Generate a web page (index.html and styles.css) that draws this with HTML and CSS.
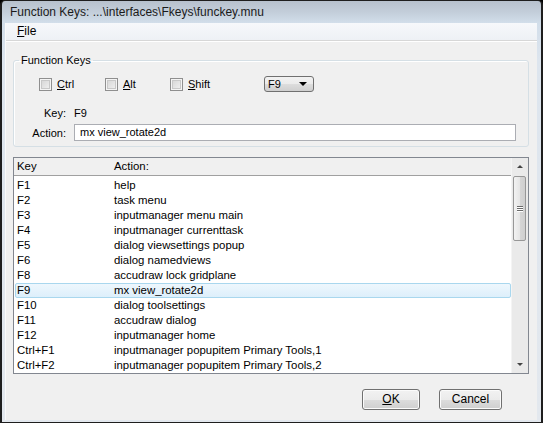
FILE: index.html
```html
<!DOCTYPE html>
<html>
<head>
<meta charset="utf-8">
<link rel="stylesheet" href="styles.css">
</head>
<body>
<div class="window">
  <div class="titlebar">Function Keys: ...\interfaces\Fkeys\funckey.mnu</div>
  <div class="client">
    <div class="menubar"><span class="menuitem"><u>F</u>ile</span></div>
    <div class="content">
      <fieldset class="group">
        <legend class="legend">Function Keys</legend>
        <div class="mods">
          <label class="check w-ctrl"><span class="box"></span><span><u>C</u>trl</span></label>
          <label class="check w-alt"><span class="box"></span><span><u>A</u>lt</span></label>
          <label class="check w-shift"><span class="box"></span><span><u>S</u>hift</span></label>
          <div class="combo"><span class="combo-text">F9</span><span class="combo-arrow"></span></div>
        </div>
        <div class="field key-field"><span class="flabel key-label">Key:</span><span class="fvalue">F9</span></div>
        <div class="field action-field"><span class="flabel action-label">Action:</span><div class="input">mx view_rotate2d</div></div>
      </fieldset>
      <div class="list">
        <div class="list-main">
          <div class="list-header"><span class="col-key">Key</span><span class="col-action">Action:</span></div>
          <div class="rows">
            <div class="row"><span class="col-key">F1</span><span class="col-action">help</span></div>
            <div class="row"><span class="col-key">F2</span><span class="col-action">task menu</span></div>
            <div class="row"><span class="col-key">F3</span><span class="col-action">inputmanager menu main</span></div>
            <div class="row"><span class="col-key">F4</span><span class="col-action">inputmanager currenttask</span></div>
            <div class="row"><span class="col-key">F5</span><span class="col-action">dialog viewsettings popup</span></div>
            <div class="row"><span class="col-key">F6</span><span class="col-action">dialog namedviews</span></div>
            <div class="row"><span class="col-key">F8</span><span class="col-action">accudraw lock gridplane</span></div>
            <div class="row selected"><span class="col-key">F9</span><span class="col-action">mx view_rotate2d</span></div>
            <div class="row"><span class="col-key">F10</span><span class="col-action">dialog toolsettings</span></div>
            <div class="row"><span class="col-key">F11</span><span class="col-action">accudraw dialog</span></div>
            <div class="row"><span class="col-key">F12</span><span class="col-action">inputmanager home</span></div>
            <div class="row"><span class="col-key">Ctrl+F1</span><span class="col-action">inputmanager popupitem Primary Tools,1</span></div>
            <div class="row"><span class="col-key">Ctrl+F2</span><span class="col-action">inputmanager popupitem Primary Tools,2</span></div>
          </div>
        </div>
        <div class="scrollbar">
          <div class="sb-btn"><span class="tri-up"></span></div>
          <div class="sb-track">
            <div class="sb-thumb"><span class="grip"></span><span class="grip"></span><span class="grip"></span></div>
          </div>
          <div class="sb-btn"><span class="tri-down"></span></div>
        </div>
      </div>
      <div class="buttons">
        <div class="button btn-ok"><u>O</u>K</div>
        <div class="button btn-cancel">Cancel</div>
      </div>
    </div>
  </div>
</div>
</body>
</html>
```
FILE: styles.css
```css
html, body {
  margin: 0;
  padding: 0;
  background: #000;
}
body {
  width: 543px;
  height: 423px;
  overflow: hidden;
  font-family: "Liberation Sans", Arial, sans-serif;
  font-size: 11px;
  color: #000;
}
.window {
  width: 543px;
  height: 423px;
  box-sizing: border-box;
  border: 1px solid #1e1e1e;
  border-left-width: 2px;
  border-right-width: 2px;
  border-radius: 5px 5px 0 0;
  background: linear-gradient(#b7c1cd 0px, #c4cfdb 12px, #d2deea 22px, #dde5ee 60px, #e3e8ee 100%);
  padding: 0 4px 2px 3px;
  display: flex;
  flex-direction: column;
}
.titlebar {
  height: 22px;
  line-height: 22px;
  padding-left: 5px;
  font-size: 12px;
  color: #1a1a1a;
  white-space: nowrap;
}
.client {
  flex: 1;
  background: #f0f0f0;
  border-left: 1px solid #fafafa;
  display: flex;
  flex-direction: column;
}
.menubar {
  height: 17px;
  border-bottom: 1px solid #d7d7d7;
  background: linear-gradient(#f6f8fb, #eef1f5);
  box-shadow: 0 1px 0 #fff;
}
.menuitem {
  display: inline-block;
  line-height: 16px;
  padding-left: 11px;
  font-size: 12px;
}
.content {
  flex: 1;
  padding: 12px 8px 0 7px;
  display: flex;
  flex-direction: column;
}
.group {
  margin: 0;
  width: 516px;
  box-sizing: border-box;
  border: 1px solid #d5dfe5;
  border-radius: 3px;
  padding: 9px 0 5px 0;
  box-shadow: inset 1px 1px 0 #fff;
}
.legend {
  padding: 0 2px;
  margin-left: 5px;
  font-size: 11px;
  line-height: 14px;
}
.mods {
  display: flex;
  align-items: center;
  height: 16px;
  padding-left: 25px;
}
.check {
  display: flex;
  align-items: center;
  gap: 5px;
}
.w-ctrl { width: 66px; }
.w-alt { width: 65px; }
.w-shift { width: 94px; }
.box {
  width: 11px;
  height: 11px;
  border: 1px solid #8f8f8f;
  background: linear-gradient(135deg, #d2d2d2, #f4f4f4);
  box-shadow: inset 0 0 0 1px #f4f4f4, inset 0 0 0 2px #c8c8c8;
}
.combo {
  border: 1px solid #707070;
  border-radius: 3px;
  background: linear-gradient(#f2f2f2 0, #ebebeb 50%, #dddddd 51%, #cfcfcf 100%);
  display: flex;
  align-items: center;
  justify-content: space-between;
  padding: 0 6px 0 3px;
  box-sizing: border-box;
  width: 50px;
  height: 16px;
}
.combo-text { line-height: 14px; }
.combo-arrow {
  width: 0;
  height: 0;
  border-left: 4px solid transparent;
  border-right: 4px solid transparent;
  border-top: 4px solid #000;
}
.field {
  display: flex;
  align-items: center;
}
.flabel {
  width: 52px;
  text-align: right;
  padding-right: 8px;
  box-sizing: content-box;
}
.key-field {
  margin-top: 14px;
  height: 14px;
}
.action-field {
  margin-top: 4px;
}
.input {
  width: 435px;
  height: 15px;
  line-height: 15px;
  border: 1px solid #abadb3;
  background: #fff;
  padding-left: 5px;
  box-sizing: content-box;
}
.list {
  margin-top: 10px;
  width: 516px;
  height: 217px;
  box-sizing: border-box;
  border: 1px solid #828790;
  background: #fff;
  display: flex;
  font-size: 11.4px;
}
.list-main {
  flex: 1;
  display: flex;
  flex-direction: column;
  padding-left: 1px;
}
.list-header {
  height: 17px;
  line-height: 17px;
  background: #f0f0f0;
  border-bottom: 1px solid #a0a0a0;
  display: flex;
  margin-left: -1px;
  padding-left: 1px;
}
.rows {
  padding-top: 2px;
}
.row {
  height: 15px;
  line-height: 15px;
  display: flex;
  box-sizing: border-box;
}
.col-key {
  width: 97px;
  padding-left: 2px;
}
.col-action {
  white-space: nowrap;
}
.row.selected {
  background: linear-gradient(#eef7fd, #ddeffb);
  border: 1px solid #a9d7ee;
  border-radius: 2px;
  line-height: 13px;
}
.row.selected .col-key {
  padding-left: 1px;
}
.scrollbar {
  width: 16px;
  background: #eaeaea;
  border-left: 1px solid #f4f4f4;
  display: flex;
  flex-direction: column;
}
.sb-btn {
  height: 17px;
  display: flex;
  align-items: center;
  justify-content: center;
}
.tri-up {
  width: 0;
  height: 0;
  border-left: 3px solid transparent;
  border-right: 3px solid transparent;
  border-bottom: 3px solid #444;
}
.tri-down {
  width: 0;
  height: 0;
  border-left: 3px solid transparent;
  border-right: 3px solid transparent;
  border-top: 3px solid #444;
}
.sb-track {
  flex: 1;
  padding-top: 1px;
}
.sb-thumb {
  width: 13px;
  height: 65px;
  margin-left: 1px;
  box-sizing: border-box;
  border: 1px solid #979797;
  border-radius: 2px;
  background: linear-gradient(90deg, #f2f2f2, #e6e6e6 50%, #d6d6d6 51%, #cfcfcf);
  display: flex;
  flex-direction: column;
  align-items: center;
  justify-content: center;
  gap: 1px;
}
.grip {
  width: 6px;
  height: 1px;
  background: #6a6a6a;
  box-shadow: 0 1px 0 #fff;
}
.buttons {
  margin-top: 15px;
  display: flex;
  justify-content: flex-end;
  gap: 19px;
  padding-right: 27px;
}
.button {
  height: 19px;
  line-height: 19px;
  text-align: center;
  border: 1px solid #707070;
  border-radius: 3px;
  background: linear-gradient(#f2f2f2 0, #ebebeb 50%, #dddddd 51%, #cfcfcf 100%);
  box-shadow: inset 0 0 0 1px #fbfbfb;
  font-size: 12px;
}
.btn-ok { width: 56px; }
.btn-cancel { width: 61px; }
```
